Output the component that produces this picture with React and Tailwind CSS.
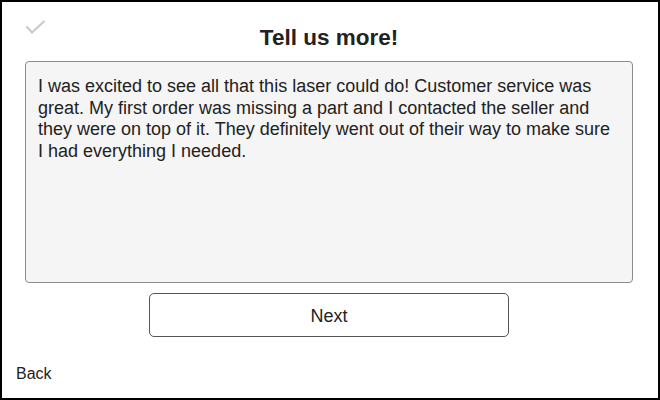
import React from 'react';

const review =
    'I was excited to see all that this laser could do! Customer service was great. My first order was missing a part and I contacted the seller and they were on top of it. They definitely went out of their way to make sure I had everything I needed.';

function CheckMark() {
    return (
        <svg width="22" height="16" viewBox="0 0 22 16" className="mt-[18px]">
            <polyline points="1.5,6.5 7,12.5 19.5,1" fill="none" stroke="#c9c9c9" strokeWidth="2" />
        </svg>
    );
}

export default function App() {
    return (
        <div className="w-[660px] h-[400px] border-2 border-black bg-white text-[#222] flex flex-col font-['Liberation_Sans',Arial,sans-serif]">
            <div className="pl-[23px] pr-[25px] flex flex-col">
                <div className="h-[59px] grid grid-cols-[1fr_auto_1fr] items-start">
                    <CheckMark />
                    <h1 className="mt-[23px] text-[22.5px] leading-[26px] font-bold">Tell us more!</h1>
                    <div />
                </div>
                <div className="h-[222px] border border-[#8c8c8c] rounded-[4px] bg-[#f5f5f5] pl-[12px] pr-[14px] pt-[14px] text-[18px] leading-[21.6px]">
                    {review}
                </div>
                <button className="mt-[10px] mx-auto w-[360px] h-[44px] pt-[3px] border border-[#555] rounded-[5px] bg-white text-[18px] text-[#222]">
                    Next
                </button>
            </div>
            <div className="mt-[28px] pl-[14px] text-[16px] leading-[18px]">Back</div>
        </div>
    );
}
